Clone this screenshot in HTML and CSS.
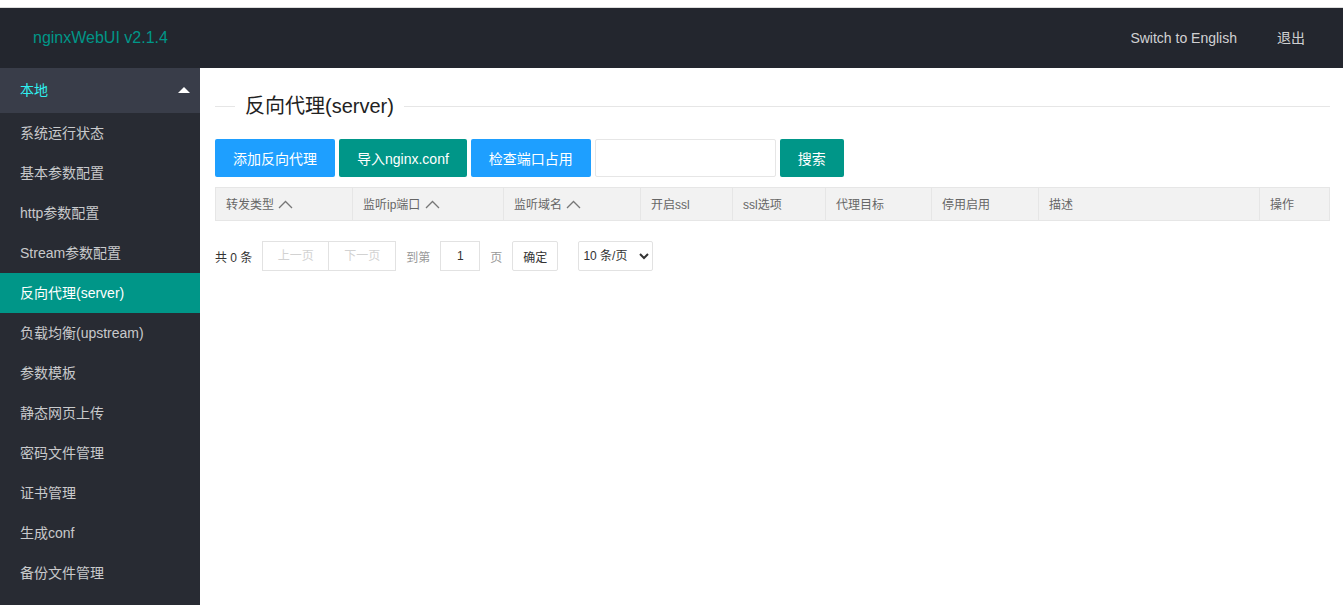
FILE: index.html
```html
<!DOCTYPE html>
<html>
<head>
  <meta charset="utf-8">
  <title>nginxWebUI</title>
  <link rel="stylesheet" href="styles.css">
</head>
<body>
<div class="topline"></div>
<div class="header">
  <div class="logo">nginxWebUI v2.1.4</div>
  <ul class="header-nav">
    <li>Switch to English</li>
    <li>退出</li>
  </ul>
</div>
<div class="main">
  <div class="side">
    <div class="side-title">
      <span>本地</span>
      <span class="arrow"></span>
    </div>
    <ul class="side-menu">
      <li>系统运行状态</li>
      <li>基本参数配置</li>
      <li>http参数配置</li>
      <li>Stream参数配置</li>
      <li class="this">反向代理(server)</li>
      <li>负载均衡(upstream)</li>
      <li>参数模板</li>
      <li>静态网页上传</li>
      <li>密码文件管理</li>
      <li>证书管理</li>
      <li>生成conf</li>
      <li>备份文件管理</li>
    </ul>
  </div>
  <div class="body">
    <div class="legend">
      <span class="legend-line short"></span>
      <span class="legend-text">反向代理(server)</span>
      <span class="legend-line"></span>
    </div>
    <div class="toolbar">
      <button class="btn btn-blue">添加反向代理</button>
      <button class="btn">导入nginx.conf</button>
      <button class="btn btn-blue">检查端口占用</button>
      <input class="search-input" type="text">
      <button class="btn btn-search">搜索</button>
    </div>
    <table class="grid">
      <colgroup>
        <col style="width:137px"><col style="width:151px"><col style="width:137px">
        <col style="width:92px"><col style="width:93px"><col style="width:106px">
        <col style="width:107px"><col style="width:221px"><col style="width:70px">
      </colgroup>
      <thead>
        <tr>
          <th>转发类型 <svg class="sort" width="15" height="9" viewBox="0 0 15 9"><polyline points="1,8 7.5,1.5 14,8"/></svg></th>
          <th>监听ip端口 <svg class="sort" width="15" height="9" viewBox="0 0 15 9"><polyline points="1,8 7.5,1.5 14,8"/></svg></th>
          <th>监听域名 <svg class="sort" width="15" height="9" viewBox="0 0 15 9"><polyline points="1,8 7.5,1.5 14,8"/></svg></th>
          <th>开启ssl</th>
          <th>ssl选项</th>
          <th>代理目标</th>
          <th>停用启用</th>
          <th>描述</th>
          <th>操作</th>
        </tr>
      </thead>
    </table>
    <div class="pager">
      <span class="count">共 0 条</span>
      <span class="page-btns">
        <a class="disabled">上一页</a><a class="disabled">下一页</a>
      </span>
      <span class="skip">到第</span>
      <input class="page-input" type="text" value="1">
      <span class="skip">页</span>
      <button class="go">确定</button>
      <select class="limit">
        <option>10 条/页</option>
      </select>
    </div>
  </div>
</div>
</body>
</html>
```

FILE: styles.css
```css
* {
  box-sizing: border-box;
}
body {
  margin: 0;
  padding: 0;
  font-family: "Liberation Sans", "Noto Sans CJK SC", sans-serif;
  font-size: 14px;
  color: #333;
  background: #fff;
  height: 605px;
  overflow: hidden;
}
ul {
  list-style: none;
  margin: 0;
  padding: 0;
}
.topline {
  height: 8px;
  border-bottom: 1px solid #dcdcdc;
  background: #fff;
}
.header {
  height: 60px;
  background: #23262e;
  display: flex;
  align-items: center;
  justify-content: space-between;
}
.logo {
  color: #009688;
  font-size: 16px;
  padding-left: 33px;
}
.header-nav {
  display: flex;
  margin-right: 18px;
}
.header-nav li {
  padding: 0 20px;
  color: rgba(255, 255, 255, .8);
  line-height: 60px;
}
.main {
  display: flex;
  height: 537px;
}
.side {
  width: 200px;
  flex: none;
  background: #282b33;
}
.side-title {
  height: 45px;
  background: #393d49;
  color: #2ff0f0;
  display: flex;
  align-items: center;
  justify-content: space-between;
  padding: 0 10px 3px 20px;
}
.arrow {
  width: 0;
  height: 0;
  border-left: 6px solid transparent;
  border-right: 6px solid transparent;
  border-bottom: 6px solid #fff;
  margin-top: 2px;
}
.side-menu li {
  height: 40px;
  line-height: 40px;
  padding-left: 20px;
  color: rgba(255, 255, 255, .75);
}
.side-menu li.this {
  background: #009688;
  color: #fff;
}
.body {
  flex: 1;
  padding: 0 13px 0 15px;
}
.legend {
  display: flex;
  align-items: center;
  height: 38px;
  margin-top: 17px;
}
.legend-line {
  flex: 1;
  height: 1px;
  background: #e6e6e6;
  margin-top: 4px;
}
.legend-line.short {
  flex: none;
  width: 20px;
}
.legend-text {
  font-size: 20px;
  padding: 0 10px;
  color: #222;
}
.toolbar {
  display: flex;
  margin-top: 16px;
}
.btn {
  height: 38px;
  padding: 0 18px;
  border: none;
  border-radius: 2px;
  background: #009688;
  color: #fff;
  font-family: inherit;
  font-size: 14px;
  margin-right: 4px;
}
.btn-blue {
  background: #1e9fff;
}
.search-input {
  width: 181px;
  height: 38px;
  border: 1px solid #e6e6e6;
  border-radius: 2px;
  margin-right: 4px;
}
.btn-search {
  width: 64px;
  padding: 0;
}
.grid {
  margin-top: 10px;
  width: 1114px;
  border-collapse: collapse;
  table-layout: fixed;
}
.grid th {
  height: 33px;
  background: #f2f2f2;
  border: 1px solid #e6e6e6;
  font-weight: normal;
  font-size: 12px;
  color: #666;
  text-align: left;
  padding: 0 10px 2px;
  white-space: nowrap;
}
.sort {
  vertical-align: 0;
  margin-left: 1px;
}
.sort polyline {
  fill: none;
  stroke: #777;
  stroke-width: 1.3;
}
.pager {
  display: flex;
  align-items: center;
  margin-top: 20px;
  font-size: 12px;
  height: 30px;
}
.count {
  margin-right: 10px;
  color: #333;
}
.page-btns {
  display: flex;
}
.page-btns a {
  height: 30px;
  line-height: 28px;
  width: 67px;
  text-align: center;
  border: 1px solid #e2e2e2;
  color: #d2d2d2;
}
.page-btns a + a {
  border-left: none;
}
.skip {
  color: #999;
  margin: 0 10px;
}
.page-input {
  width: 40px;
  height: 30px;
  border: 1px solid #e2e2e2;
  text-align: center;
  font-family: inherit;
  font-size: 12px;
  color: #333;
}
.go {
  height: 30px;
  width: 46px;
  border: 1px solid #e2e2e2;
  background: #fff;
  font-family: inherit;
  font-size: 12px;
  color: #333;
  border-radius: 2px;
}
.limit {
  margin-left: 20px;
  height: 30px;
  width: 75px;
  border: 1px solid #e2e2e2;
  border-radius: 2px;
  background: #fff;
  font-family: inherit;
  font-size: 12px;
  color: #333;
}
```
